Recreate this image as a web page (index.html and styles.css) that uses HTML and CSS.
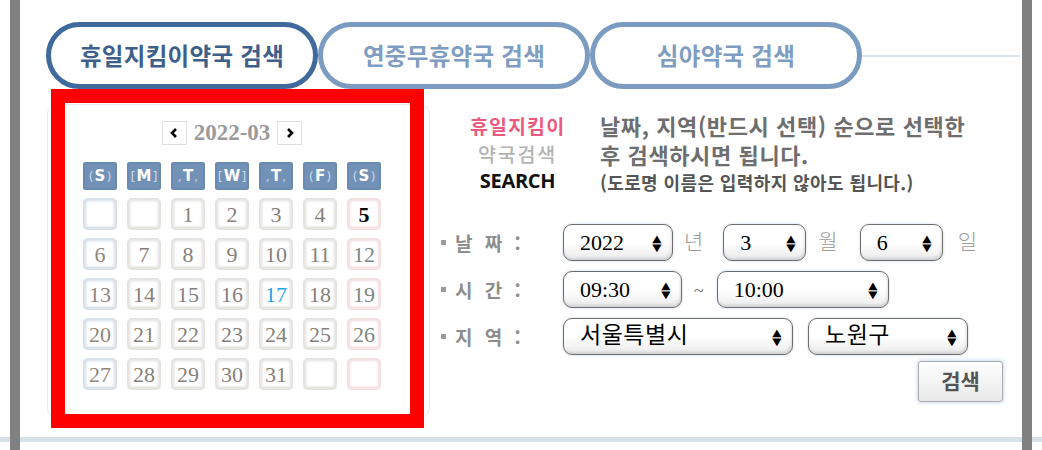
FILE: index.html
```html
<!DOCTYPE html>
<html lang="ko">
<head>
<meta charset="utf-8">
<title>휴일지킴이약국 검색</title>
<link rel="stylesheet" href="styles.css">
</head>
<body>
<div class="edge"></div>
<div class="bar"></div>
<div class="content">
  <div class="tabs">
    <div class="tab active">휴일지킴이약국 검색</div>
    <div class="tab">연중무휴약국 검색</div>
    <div class="tab">심야약국 검색</div>
    <div class="tabline"></div>
  </div>
  <div class="main">
    <div class="calendar">
      <div class="cal-head">
        <span class="navbtn"><svg width="12" height="12" viewBox="0 0 12 12"><path d="M8 2 L4 6 L8 10" fill="none" stroke="#000" stroke-width="2.6"/></svg></span>
        <span class="month">2022-03</span>
        <span class="navbtn"><svg width="12" height="12" viewBox="0 0 12 12"><path d="M4 2 L8 6 L4 10" fill="none" stroke="#000" stroke-width="2.6"/></svg></span>
      </div>
      <div class="grid">
        <div class="dow"><i>(</i>S<i>)</i></div>
        <div class="dow"><i>[</i>M<i>]</i></div>
        <div class="dow"><i>,</i>T<i>,</i></div>
        <div class="dow"><i>[</i>W<i>]</i></div>
        <div class="dow"><i>,</i>T<i>,</i></div>
        <div class="dow"><i>(</i>F<i>)</i></div>
        <div class="dow"><i>(</i>S<i>)</i></div>

        <div class="day sun"></div><div class="day"></div><div class="day">1</div><div class="day">2</div><div class="day">3</div><div class="day">4</div><div class="day sat today">5</div>
        <div class="day sun">6</div><div class="day">7</div><div class="day">8</div><div class="day">9</div><div class="day">10</div><div class="day">11</div><div class="day sat">12</div>
        <div class="day sun">13</div><div class="day">14</div><div class="day">15</div><div class="day">16</div><div class="day blue">17</div><div class="day">18</div><div class="day sat">19</div>
        <div class="day sun">20</div><div class="day">21</div><div class="day">22</div><div class="day">23</div><div class="day">24</div><div class="day">25</div><div class="day sat">26</div>
        <div class="day sun">27</div><div class="day">28</div><div class="day">29</div><div class="day">30</div><div class="day">31</div><div class="day"></div><div class="day sat"></div>
      </div>
    </div>
    <div class="panel">
      <div class="intro">
        <div class="logo">
          <div class="l1">휴일지킴이</div>
          <div class="l2">약국검색</div>
          <div class="l3">SEARCH</div>
        </div>
        <div class="desc">
          <div class="d1">날짜, 지역(반드시 선택) 순으로 선택한</div>
          <div class="d1">후 검색하시면 됩니다.</div>
          <div class="d3">(도로명 이름은 입력하지 않아도 됩니다.)</div>
        </div>
      </div>
      <div class="form">
        <div class="row">
          <div class="label"><span class="dot"></span>날 짜 :</div>
          <div class="sel w-year"><span class="val">2022</span><span class="arr">▲<br>▼</span></div>
          <span class="unit u-year">년</span>
          <div class="sel w-md"><span class="val">3</span><span class="arr">▲<br>▼</span></div>
          <span class="unit u-month">월</span>
          <div class="sel w-md"><span class="val">6</span><span class="arr">▲<br>▼</span></div>
          <span class="unit u-day">일</span>
        </div>
        <div class="row">
          <div class="label"><span class="dot"></span>시 간 :</div>
          <div class="sel w-from"><span class="val">09:30</span><span class="arr">▲<br>▼</span></div>
          <span class="tilde">~</span>
          <div class="sel w-to"><span class="val">10:00</span><span class="arr">▲<br>▼</span></div>
        </div>
        <div class="row">
          <div class="label"><span class="dot"></span>지 역 :</div>
          <div class="sel w-city"><span class="val ko">서울특별시</span><span class="arr">▲<br>▼</span></div>
          <div class="sel w-gu"><span class="val ko">노원구</span><span class="arr">▲<br>▼</span></div>
        </div>
        <div class="btnrow"><button class="search">검색</button></div>
      </div>
    </div>
  </div>
</div>
<div class="bar"></div>
<div class="edge"></div>
<div class="highlight"></div>
</body>
</html>
```
FILE: styles.css
```css
* { box-sizing: border-box; }
html, body { margin: 0; padding: 0; }
body {
  width: 1042px;
  height: 450px;
  overflow: hidden;
  display: flex;
  position: relative;
  font-family: "Noto Sans CJK KR", "Noto Sans", sans-serif;
  background:
    linear-gradient(#d7e1e8, #d7e1e8) 0 437px / 100% 5px no-repeat,
    #ffffff;
}
.edge { width: 10px; flex: none; }
.bar { width: 10px; flex: none; background: #808080; }
.content { width: 1002px; flex: none; }

/* tabs */
.tabs {
  display: flex;
  align-items: center;
  padding: 22px 0 0 26px;
}
.tab {
  width: 272px;
  height: 67px;
  flex: none;
  border: 5px solid #7b9bc0;
  border-radius: 34px;
  display: flex;
  align-items: center;
  justify-content: center;
  font-size: 23.5px;
  font-weight: 700;
  color: #7f9dc1;
  letter-spacing: 0.3px;
  padding-bottom: 2px;
}
.tab.active { border-color: #3f6a9b; color: #3f5f8b; }
.tabline { flex: 1; height: 2px; background: #dde5ed; margin-right: 2px; }

/* main */
.main { display: flex; margin-top: 15px; }

.calendar {
  width: 383px;
  height: 314px;
  margin-left: 27px;
  border: 1px solid #e4eaf0;
  border-radius: 10px;
  padding: 16px 0 0 35px;
}
.cal-head {
  width: 298px;
  height: 24px;
  display: flex;
  align-items: center;
  justify-content: center;
  gap: 7px;
}
.navbtn {
  width: 25px;
  height: 24px;
  border: 1px solid #dedede;
  background: #fff;
  display: flex;
  align-items: center;
  justify-content: center;
}
.month {
  font-family: "Liberation Serif", serif;
  font-weight: 700;
  font-size: 23px;
  color: #9a9a9a;
  line-height: 24px;
}
.grid {
  margin-top: 17px;
  display: grid;
  grid-template-columns: repeat(7, 34px);
  grid-template-rows: 28px repeat(5, 32px);
  column-gap: 10px;
  row-gap: 8px;
}
.dow {
  background: #7191b7;
  border-radius: 3px;
  box-shadow: inset 0 0 0 2px #6a8ab0;
  color: #fff;
  font-family: "DejaVu Sans", sans-serif;
  font-weight: 700;
  font-size: 15px;
  display: flex;
  align-items: center;
  justify-content: center;
  gap: 1px;
}
.dow i { font-style: normal; font-weight: 400; color: #c8d6e6; font-size: 13px; }
.day {
  background: #fff;
  border-radius: 5px;
  box-shadow: inset 0 -3px 0 0 #e6e4e1, inset 0 0 3px 3px #e3e1de;
  font-family: "Liberation Serif", serif;
  font-size: 22px;
  color: #878079;
  display: flex;
  align-items: center;
  justify-content: center;
  padding-top: 2px;
  line-height: 1;
}
.day.sun { box-shadow: inset 0 -3px 0 0 #d9e2ea, inset 0 0 3px 3px #d6dfe8; color: #8f857c; }
.day.sat { box-shadow: inset 0 -3px 0 0 #f5e1e3, inset 0 0 3px 3px #f3dddf; color: #7c8781; }
.day.today { color: #000; font-weight: 700; }
.day.blue { color: #1fa7e3; }

/* right panel */
.panel {
  flex: 1;
  margin-left: 10px;
  padding: 7px 19px 0 0;
  display: flex;
  flex-direction: column;
}
.intro { display: flex; height: 86px; }
.logo {
  width: 95px;
  margin: 1px 0 0 30px;
  text-align: center;
  font-weight: 700;
  white-space: nowrap;
}
.logo .l1 { font-size: 19.5px; line-height: 28px; color: #ea5a7f; letter-spacing: 1.1px; }
.logo .l2 { font-size: 19.5px; line-height: 28px; color: #b3b3b3; font-weight: 500; letter-spacing: 1.8px; }
.logo .l3 {
  font-family: "Open Sans", sans-serif;
  font-size: 20px;
  line-height: 30px;
  margin-top: -2px;
  color: #111;
  letter-spacing: -0.3px;
}
.desc { margin-left: 35px; font-weight: 700; white-space: nowrap; }
.desc .d1 { font-size: 22px; line-height: 29px; color: #6e6e6e; letter-spacing: 0.6px; }
.desc .d3 { font-size: 18px; line-height: 26px; color: #555; letter-spacing: 0.4px; }

.form { margin-top: 27px; display: flex; flex-direction: column; gap: 10px; }
.row { display: flex; align-items: center; height: 37px; }
.label {
  width: 123px;
  flex: none;
  display: flex;
  align-items: center;
  font-size: 19px;
  font-weight: 700;
  color: #8d8d8d;
  word-spacing: 7px;
  padding-left: 1px;
  white-space: pre;
}
.dot { width: 5px; height: 5px; background: #9a9a9a; margin-right: 9px; }
.sel {
  height: 37px;
  flex: none;
  border: 1.5px solid #6e6e6e;
  border-radius: 9px;
  background: linear-gradient(#ffffff 0%, #ffffff 50%, #ebebeb 100%);
  box-shadow: inset -1px -2px 3px rgba(0, 0, 0, 0.12), 0 0 2px 1px #e3ecf5;
  display: flex;
  align-items: center;
  justify-content: space-between;
  padding: 0 11px 0 16px;
}
.val {
  font-family: "Liberation Serif", serif;
  font-size: 22px;
  color: #000;
  line-height: 1;
}
.val.ko {
  font-family: "Noto Sans CJK KR", sans-serif;
  font-size: 23px;
  font-weight: 400;
  margin-top: -6px;
  letter-spacing: 0.5px;
}
.arr {
  font-family: "DejaVu Sans", sans-serif;
  font-size: 10px;
  line-height: 9px;
  color: #000;
  text-align: center;
  transform: scaleX(1.2);
}
.w-year { width: 110px; }
.w-md { width: 83px; }
.w-from { width: 119px; }
.w-to { width: 172px; }
.w-city { width: 230px; }
.w-gu { width: 160px; margin-left: 15px; }
.unit {
  font-size: 21px;
  font-weight: 300;
  color: #9a9a9a;
  margin-top: -6px;
}
.u-year { margin: -6px 20px 0 11px; }
.u-month { margin: -6px 22px 0 12px; }
.u-day { margin: -6px 0 0 15px; }
.tilde {
  font-family: "Liberation Serif", serif;
  font-size: 18px;
  color: #777;
  margin: 4px 13px 0 12px;
}
.btnrow { display: flex; justify-content: flex-end; margin-top: -4px; }
.search {
  width: 85px;
  height: 41px;
  border: 1px solid #a9a9a9;
  border-radius: 3px;
  background: linear-gradient(#ffffff, #e9e9e9);
  box-shadow: 0 0 3px 2px #dfe9f4;
  font-family: "Noto Sans CJK KR", sans-serif;
  font-size: 21px;
  font-weight: 700;
  color: #555;
  padding: 0 0 3px;
}

/* red annotation overlay */
.highlight {
  position: absolute;
  left: 51px;
  top: 89px;
  width: 373px;
  height: 339px;
  border: 14px solid #ff0000;
  pointer-events: none;
}
```
